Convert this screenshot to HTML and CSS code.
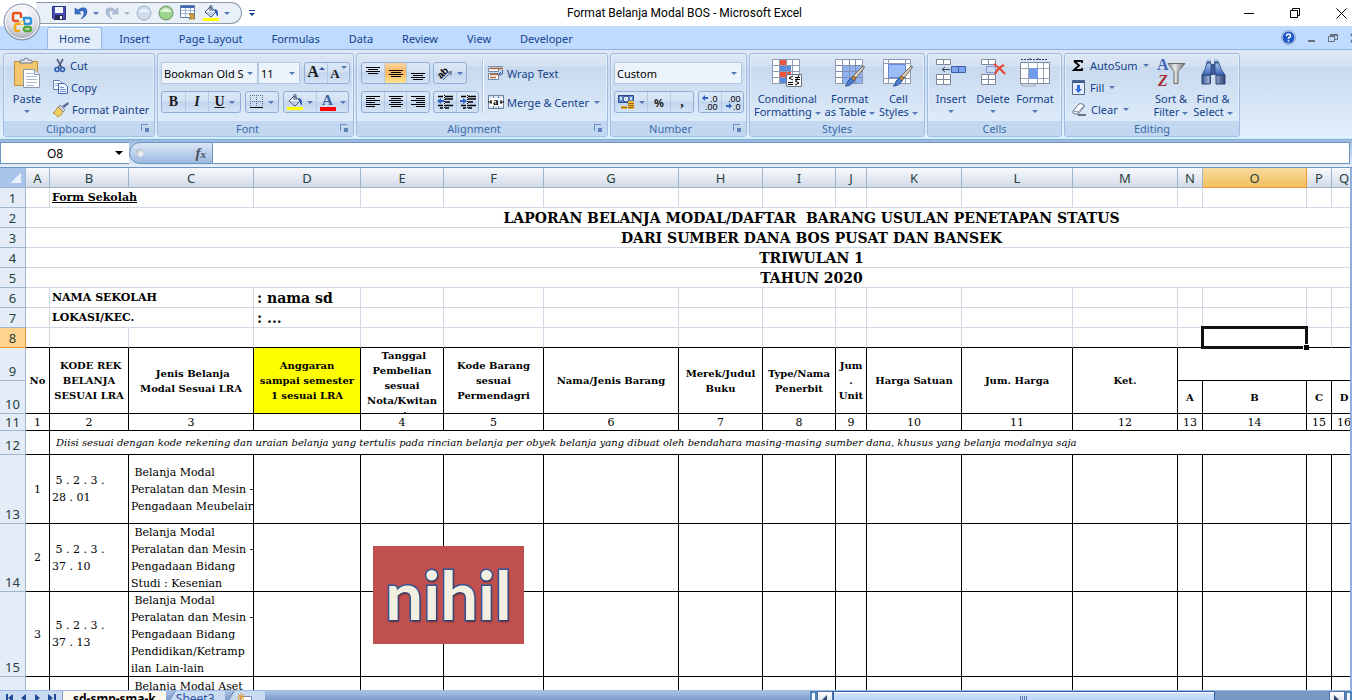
FILE: index.html
```
<!DOCTYPE html>
<html lang="id">
<head>
    <meta charset="UTF-8">
    <meta name="viewport" content="width=device-width, initial-scale=1.0">
    <title>Format Belanja Modal BOS - Microsoft Excel</title>
    <link rel="stylesheet" href="styles.css">
</head>
<body>
    <!-- shared icon parts -->
    <svg class="defs" width="0" height="0" aria-hidden="true">
        <defs>
            <linearGradient id="gBlue" x1="0" y1="0" x2="0" y2="1"><stop offset="0" stop-color="#a9c4f0"/><stop offset="1" stop-color="#3a62b5"/></linearGradient>
            <linearGradient id="gSteel" x1="0" y1="0" x2="1" y2="0"><stop offset="0" stop-color="#35538f"/><stop offset=".4" stop-color="#c6d6f0"/><stop offset="1" stop-color="#2c4577"/></linearGradient>
            <linearGradient id="gGrey" x1="0" y1="0" x2="1" y2="0"><stop offset="0" stop-color="#8b8b8b"/><stop offset=".4" stop-color="#e8e8e8"/><stop offset="1" stop-color="#6b6b6b"/></linearGradient>
            <radialGradient id="gOrb" cx=".5" cy=".25" r=".8"><stop offset="0" stop-color="#ffffff"/><stop offset=".6" stop-color="#dcdfe6"/><stop offset="1" stop-color="#8f99ab"/></radialGradient>
            <symbol id="bucket" viewBox="0 0 16 16">
                <path d="M2 7 7 2l6 5-5 5z" fill="#f4f7fc" stroke="#3b4f74"/>
                <path d="M3 7h9L8 11z" fill="#b9cbe6"/>
                <path d="M7 6V1.500q0-1 1-1t1 1V6" fill="none" stroke="#3b4f74"/>
                <path d="M11 4q4 0 4 4v3q-2 0-2-3z" fill="#2f60b8"/>
                <path d="M0 13h16v3H0z" fill="#ff0"/>
            </symbol>
            <symbol id="brush" viewBox="0 0 20 22">
                <path d="M18 1q2 0 1 2l-8 10-3-2z" fill="#d9d0c4" stroke="#6d6255"/>
                <path d="M8 11l3 2-2 3-3-3z" fill="#c48b4e" stroke="#7e5426"/>
                <path d="M6 13l3 3q-3 5-9 5 3-2 3-5z" fill="#4f7ecb" stroke="#2d559d"/>
            </symbol>
        </defs>
    </svg>

    <header class="titlebar">
        <button class="orb" aria-label="Office Button">
            <svg width="38" height="38" viewBox="0 0 38 38">
                <circle cx="19" cy="19" r="18" fill="url(#gOrb)" stroke="#8291ab"/>
                <circle cx="19" cy="19" r="16.500" fill="none" stroke="#fff"/>
                <g fill="none" stroke-width="2.400">
                    <path d="M16 18h-4q-2 0-2-2v-4q0-2 2-2h4q2 0 2 2v3" stroke="#e8501e"/>
                    <path d="M21 15h5q2 0 2 2v2q0 2-2 2h-3q-2 0-2-2z" stroke="#2f93dc"/>
                    <path d="M17 21h-3q-2 0-2 2v3q0 2 2 2h3" stroke="#f5a81c"/>
                    <path d="M21 28v-4M21 24h5q2 0 2 2v0q0 2-2 2h-5" stroke="#58a93b"/>
                </g>
                <path d="M17 18h4v4h-4z" fill="#f7c046"/>
                <path d="M18 19h2v2h-2z" fill="#fff"/>
            </svg>
        </button>
        <div class="qat">
            <button aria-label="Save"><svg width="14" height="14" viewBox="0 0 14 14"><path d="M.5.5h13v13H2L.5 12z" fill="#4a4fb5" stroke="#2c2f86"/><path d="M3 1h8v6H3z" fill="#f3f6ff"/><path d="M3 9h8v5H3z" fill="#252a52"/><path d="M8 10h2v3H8z" fill="#fff"/></svg></button>
            <button class="with-caret" aria-label="Undo"><svg width="14" height="14" viewBox="0 0 14 14"><path d="M1 2v6h6L5 6q5-3 5 1 0 3-3 6 6-3 6-7 0-5-5-4-2 0-4 2z" fill="#3b6fc9" stroke="#2754a5" stroke-width=".6"/></svg><i class="caret"></i></button>
            <button class="with-caret off" aria-label="Redo"><svg width="14" height="14" viewBox="0 0 14 14"><path d="M13 2v6H7l2-2q-5-3-5 1 0 3 3 6-6-3-6-7 0-5 5-4 2 0 4 2z" fill="#aebfd6" stroke="#93a6c2" stroke-width=".6"/></svg><i class="caret"></i></button>
            <button aria-label="Back"><svg width="16" height="16" viewBox="0 0 16 16"><circle cx="8" cy="8" r="7" fill="#cfdcec" stroke="#9fb1c9"/><path d="M2 7q6-7 12 0z" fill="#e9f0f8"/></svg></button>
            <button aria-label="Forward"><svg width="16" height="16" viewBox="0 0 16 16"><circle cx="8" cy="8" r="7" fill="#9cd58a" stroke="#6f8f70"/><path d="M2 7q6-8 12 0z" fill="#dff3d8"/></svg></button>
            <button aria-label="Form"><svg width="17" height="16" viewBox="0 0 17 16"><path d="M.5.5h14v12H.5z" fill="#fff" stroke="#6280ad"/><path d="M1 1h13v2H1z" fill="#3f68b4"/><path d="M1 5.500h13M1 8.500h13M5.500 3v9M10.500 3v9" stroke="#9fb4d8"/><path d="M9 9h6l-2 2 2 3H9l2-2z" fill="#e2ab3e" stroke="#8c6113" stroke-width=".7"/></svg></button>
            <button class="with-caret" aria-label="Fill Color"><svg width="16" height="16"><use href="#bucket"/></svg><i class="caret"></i></button>
        </div>
        <button class="qat-more" aria-label="Customize Quick Access Toolbar"><i></i><i class="caret"></i></button>
        <h1>Format Belanja Modal BOS - Microsoft Excel</h1>
        <div class="win">
            <button aria-label="Minimize"><svg width="11" height="11"><path d="M0 5.500h10" stroke="#000"/></svg></button>
            <button aria-label="Restore"><svg width="11" height="11"><path d="M.5 2.500h7v7h-7zM2.500 2.500v-2h7v7h-2" fill="none" stroke="#000"/></svg></button>
            <button aria-label="Close"><svg width="11" height="11"><path d="M.5.5l10 10M10.500.5l-10 10" stroke="#000"/></svg></button>
        </div>
    </header>

    <nav class="tabs">
        <a href="#" class="active">Home</a>
        <a href="#">Insert</a>
        <a href="#">Page Layout</a>
        <a href="#">Formulas</a>
        <a href="#">Data</a>
        <a href="#">Review</a>
        <a href="#">View</a>
        <a href="#">Developer</a>
        <div class="doc-controls">
            <button aria-label="Help"><svg width="15" height="15" viewBox="0 0 15 15"><circle cx="7.500" cy="7.500" r="6.500" fill="#2059c8" stroke="#dce9fb"/><circle cx="7.500" cy="7.500" r="7" fill="none" stroke="#5b7bb5" stroke-width=".6"/><path d="M5.500 6q0-2 2-2t2 2q0 1-2 2v1" fill="none" stroke="#fff" stroke-width="1.500"/><path d="M6.700 10.300h1.600v1.500H6.700z" fill="#fff"/></svg></button>
            <button aria-label="Minimize document"><svg width="8" height="8"><path d="M0 6h7v2H0z" fill="#67717f"/></svg></button>
            <button aria-label="Restore document"><svg width="10" height="8"><path d="M.5 2.500h6v5h-6zM2 .5h7.500v5H7" fill="none" stroke="#67717f"/><path d="M2 0h8v2H2z" fill="#67717f"/></svg></button>
            <button aria-label="Close document"><svg width="8" height="8"><path d="M1 0l7 8M8 0L1 8" stroke="#67717f" stroke-width="2"/></svg></button>
        </div>
    </nav>

    <section class="ribbon">
        <div class="group clipboard">
            <div class="group-body">
                <button class="big">
                    <svg width="28" height="30" viewBox="0 0 28 30"><path d="M1.500 3.500h23v24h-23z" fill="#f2c66e" stroke="#c3913c"/><path d="M7 5V3q0-1 2-1h2q0-2 2-2t2 2h2q2 0 2 1v2z" fill="#e2e6ec" stroke="#6d7686"/><path d="M10.500 11.500h11l5 5v13h-16z" fill="#fff" stroke="#8797b1"/><path d="M21.500 11.500v5h5" fill="#dbe6f5" stroke="#8797b1"/><path d="M13 15.500h7M13 18.500h11M13 21.500h11M13 24.500h11M13 27.500h8" stroke="#a8b9d4"/></svg>
                    <span>Paste</span><i class="caret"></i>
                </button>
                <div class="list">
                    <button><svg width="14" height="15" viewBox="0 0 14 15"><path d="M4 1l5 9M10 1L5 10" stroke="#51617c" stroke-width="1.600"/><circle cx="4" cy="11.500" r="2" fill="none" stroke="#2d5ab0" stroke-width="1.600"/><circle cx="9.500" cy="11.500" r="2" fill="none" stroke="#2d5ab0" stroke-width="1.600"/></svg>Cut</button>
                    <button><svg width="15" height="14" viewBox="0 0 15 14"><path d="M.5.5h6l2 2v7h-8z" fill="#fff" stroke="#5c7db3"/><path d="M2 3.500h4M2 5.500h4" stroke="#8aa8d8"/><path d="M5.500 3.500h6l3 3v7h-9z" fill="#eef4ff" stroke="#3e64a8"/><path d="M7 7.500h4M7 9.500h6M7 11.500h6" stroke="#6f95d2"/></svg>Copy</button>
                    <button><svg width="16" height="15" viewBox="0 0 16 15"><path d="M15 0l1 2-5 4-2-2z" fill="#5a6f9c"/><path d="M7 3l5 5-2 2-5-5z" fill="#c8cfdb" stroke="#5f6c84" stroke-width=".7"/><path d="M5 5l5 5q-2 4-5 5-2-3-5-4 3-2 5-6z" fill="#f1cf62" stroke="#9c7921" stroke-width=".7"/></svg>Format Painter</button>
                </div>
            </div>
            <div class="caption">Clipboard<i class="launcher"></i></div>
        </div>

        <div class="group font">
            <div class="group-body rows">
                <div class="row">
                    <div class="joined-combos">
                        <select class="combo family" aria-label="Font"><option>Bookman Old S</option></select>
                        <select class="combo size" aria-label="Font Size"><option>11</option></select>
                    </div>
                    <div class="btns">
                        <button class="glyph grow" aria-label="Increase Font Size">A<i class="up"></i></button>
                        <button class="glyph shrink" aria-label="Decrease Font Size">A<i class="caret"></i></button>
                    </div>
                </div>
                <div class="row">
                    <div class="btns biu">
                        <button class="glyph"><b>B</b></button>
                        <button class="glyph"><em>I</em></button>
                        <button class="glyph wide"><u>U</u><i class="caret"></i></button>
                    </div>
                    <div class="btns"><button class="wide" aria-label="Borders"><svg width="14" height="14"><path d="M.5 0v12M6.500 0v12M12.500 0v12M0 .5h13M0 6.500h13" stroke="#5d6b82" stroke-dasharray="1 1"/><path d="M0 12.500h13" stroke="#000" stroke-width="1"/></svg><i class="caret"></i></button></div>
                    <div class="btns">
                        <button class="wide" aria-label="Fill Color"><svg width="16" height="16"><use href="#bucket"/></svg><i class="caret"></i></button>
                        <button class="wide" aria-label="Font Color"><span class="fcolor">A</span><i class="caret"></i></button>
                    </div>
                </div>
            </div>
            <div class="caption">Font<i class="launcher"></i></div>
        </div>

        <div class="group alignment">
            <div class="group-body">
                <div class="rows">
                    <div class="row">
                        <div class="btns three">
                            <button aria-label="Top Align"><svg width="14" height="14"><path d="M0 1.500h14M2 3.500h10M0 5.500h14M2 7.500h10" stroke="#000"/></svg></button>
                            <button class="on" aria-label="Middle Align"><svg width="14" height="14"><path d="M0 4.500h14M2 6.500h10M0 8.500h14M2 10.500h10" stroke="#000"/></svg></button>
                            <button aria-label="Bottom Align"><svg width="14" height="14"><path d="M0 7.500h14M2 9.500h10M0 11.500h14M2 13.500h10" stroke="#000"/></svg></button>
                        </div>
                        <div class="btns"><button class="wide" aria-label="Orientation"><svg width="16" height="16" viewBox="0 0 16 16"><text x="0" y="11" transform="rotate(-45 6 8)" font-family="Liberation Sans" font-size="10" font-weight="bold">ab</text><path d="M6 15l8-8M14.500 6.500l-4 1M14.500 6.500l-1 4" stroke="#55657f" fill="none"/></svg><i class="caret"></i></button></div>
                    </div>
                    <div class="row">
                        <div class="btns three">
                            <button aria-label="Align Left"><svg width="14" height="12"><path d="M0 .5h14M0 2.500h9M0 4.500h14M0 6.500h9M0 8.500h14M0 10.500h9" stroke="#000"/></svg></button>
                            <button aria-label="Center"><svg width="14" height="12"><path d="M0 .5h14M2 2.500h10M0 4.500h14M2 6.500h10M0 8.500h14M2 10.500h10" stroke="#000"/></svg></button>
                            <button aria-label="Align Right"><svg width="14" height="12"><path d="M0 .5h14M5 2.500h9M0 4.500h14M5 6.500h9M0 8.500h14M5 10.500h9" stroke="#000"/></svg></button>
                        </div>
                        <div class="btns two">
                            <button aria-label="Decrease Indent"><svg width="16" height="14"><path d="M1 1.500h5M8 1.500h8M8 4h8M8 7h5M1 10.500h5M8 10.500h8M3 13h3M8 13h4" stroke="#000" stroke-width="1.300"/><path d="M7.500 0v14" stroke="#000" stroke-dasharray="1 1"/><path d="M0 6l4-3v2h3v2H4v2z" fill="#2f62c4"/></svg></button>
                            <button aria-label="Increase Indent"><svg width="16" height="14"><path d="M1 1.500h5M8 1.500h8M8 4h8M8 7h5M1 10.500h5M8 10.500h8M3 13h3M8 13h4" stroke="#000" stroke-width="1.300"/><path d="M7.500 0v14" stroke="#000" stroke-dasharray="1 1"/><path d="M7 6L3 3v2H0v2h3v2z" fill="#2f62c4"/></svg></button>
                        </div>
                    </div>
                </div>
                <div class="sep"></div>
                <div class="rows plain">
                    <button><svg width="16" height="16" viewBox="0 0 16 16"><path d="M.5 3.500h10v3H.5zM.5 8.500h10v6H.5z" fill="#fff" stroke="#6f83a3"/><path d="M0 1.500h15" stroke="#7a8fb0"/><path d="M2 3.500h13M2 9.500h8M2 12.500h6" stroke="#b0673c" stroke-width="1.500"/><path d="M14.500 5v4h-3M13 7l-2 2 2 2" fill="none" stroke="#3f5f9a"/></svg>Wrap Text</button>
                    <button><svg width="16" height="16" viewBox="0 0 16 16"><path d="M.5 1.500h15v13H.5z" fill="#dbe6f5" stroke="#6f83a3"/><path d="M5.500 1v3M10.500 1v3M5.500 12v3M10.500 12v3" stroke="#6f83a3"/><path d="M1 4h14v8H1z" fill="#fff"/><path d="M0 8h4M12 8h4M3 6v4M13 6v4" stroke="#000"/><text x="5" y="11" font-family="Liberation Serif" font-weight="bold" font-size="11">a</text></svg>Merge &amp; Center<i class="caret"></i></button>
                </div>
            </div>
            <div class="caption">Alignment<i class="launcher"></i></div>
        </div>

        <div class="group number">
            <div class="group-body rows">
                <select class="combo" aria-label="Number Format"><option>Custom</option></select>
                <div class="row">
                    <div class="btns money">
                        <button class="wide" aria-label="Accounting Number Format"><svg width="17" height="16" viewBox="0 0 17 16"><path d="M.5 1.500h15v7H.5z" fill="#5f8bd0" stroke="#2a4c8e"/><circle cx="8" cy="5" r="3" fill="#d6e3f6" stroke="#2a4c8e"/><path d="M2 3h2v3H2zM12 3h2v3h-2z" fill="#cbdcf4"/><path d="M10 7h6v8h-6zM3 12h6v3H3z" fill="#efb530"/><path d="M10 9.500h6M10 11.500h6M10 13.500h6M3 13.500h6" stroke="#9a6910"/></svg><i class="caret"></i></button>
                        <button class="pct">%</button>
                        <button class="glyph">,</button>
                    </div>
                    <div class="btns two">
                        <button aria-label="Increase Decimal"><svg width="16" height="15" viewBox="0 0 16 15"><text x="8" y="7" font-family="Liberation Sans" font-size="9">.0</text><text x="3" y="15" font-family="Liberation Sans" font-size="9">.00</text><path d="M0 3l3-3v2h3v2H3v2z" fill="#2f62c4"/></svg></button>
                        <button aria-label="Decrease Decimal"><svg width="16" height="15" viewBox="0 0 16 15"><text x="3" y="7" font-family="Liberation Sans" font-size="9">.00</text><text x="8" y="15" font-family="Liberation Sans" font-size="9">.0</text><path d="M7 11L4 8v2H1v2h3v2z" fill="#2f62c4"/></svg></button>
                    </div>
                </div>
            </div>
            <div class="caption">Number<i class="launcher"></i></div>
        </div>

        <div class="group styles">
            <div class="group-body">
                <button class="big">
                    <svg width="30" height="30" viewBox="0 0 30 30"><path d="M.5 1.500h27v24H.5z" fill="#fff" stroke="#8c9ab3"/><path d="M7 2h7v6H7zM7 14h12v6H7z" fill="#f0553b"/><path d="M7 8h12v6H7z" fill="#5b8be0"/><path d="M7 20h7v5H7z" fill="#5b8be0"/><path d="M0 7.500h28M0 13.500h28M0 19.500h28M7.500 1v25M14.500 1v25M20.500 1v25" stroke="#8c9ab3"/><path d="M14.500 16.500h15v12h-15z" fill="#fff" stroke="#6b7486"/><path d="M21 18l-4 2 4 2M16 24.500h5M23 19.500h5M23 21.500h5M27 17l-3 6M23 23l4 2-4 2M16 26.500h5" fill="none" stroke="#000"/></svg>
                    <span>Conditional<br>Formatting <i class="caret"></i></span>
                </button>
                <button class="big">
                    <svg width="30" height="30" viewBox="0 0 30 30"><path d="M.5 1.500h27v24H.5z" fill="#fff" stroke="#8c9ab3"/><path d="M7 7h20v18H7z" fill="#8fb2f0"/><path d="M0 7.500h28M0 13.500h28M0 19.500h28M7.500 1v25M14.500 1v25M20.500 1v25" stroke="#7f91b3"/><use href="#brush" x="10" y="7" width="20" height="22"/></svg>
                    <span>Format<br>as Table <i class="caret"></i></span>
                </button>
                <button class="big">
                    <svg width="30" height="30" viewBox="0 0 30 30"><path d="M.5 1.500h27v24H.5z" fill="#fff" stroke="#8c9ab3"/><path d="M0 5.500h28M0 20.500h28M5.500 1v25M22.500 1v25" stroke="#8c9ab3"/><path d="M5.500 6.500h17v13h-17z" fill="#9dbdf8" stroke="#6288d6"/><use href="#brush" x="10" y="7" width="20" height="22"/></svg>
                    <span>Cell<br>Styles <i class="caret"></i></span>
                </button>
            </div>
            <div class="caption">Styles</div>
        </div>

        <div class="group cells">
            <div class="group-body">
                <button class="big">
                    <svg width="30" height="30" viewBox="0 0 30 30"><path d="M.5 1.500h14v5H.5zM.5 16.500h14v10H.5zM.5 21.500h14M7.500 1.500v5M7.500 16.500v10" fill="#fff" stroke="#7d889b"/><path d="M15.500 8.500h14v6h-14z" fill="#7ea4ec" stroke="#3a5ea8"/><path d="M22.500 8.500v6" stroke="#3a5ea8"/><path d="M6 11.500h8M9 9l-3 2.500L9 14" fill="none" stroke="#33435e"/></svg>
                    <span>Insert</span><i class="caret"></i>
                </button>
                <button class="big">
                    <svg width="30" height="30" viewBox="0 0 30 30"><path d="M3.500 1.500h14v5h-14zM3.500 16.500h14v10h-14zM3.500 21.500h14M10.500 1.500v5M10.500 16.500v10" fill="#fff" stroke="#7d889b"/><path d="M8.500 8.500h9v6h-9z" fill="none" stroke="#2f5cc0" stroke-dasharray="1 1"/><path d="M16 6q6 4 11 10M26 7q-6 3-9 9" fill="none" stroke="#e8432c" stroke-width="2"/></svg>
                    <span>Delete</span><i class="caret"></i>
                </button>
                <button class="big">
                    <svg width="30" height="30" viewBox="0 0 30 30"><path d="M.5 4.500h29v21H.5z" fill="#fff" stroke="#7d889b"/><path d="M.5 10.500h29M.5 20.500h29M8.500 4.500v21M17.500 4.500v21M23.500 4.500v21" stroke="#9aa5b8"/><path d="M9 10h9v11H9z" fill="#6f9bea"/><path d="M2 26h13v2H2z" fill="#f4f6fa" stroke="#9aa5b8"/><path d="M1 1.500h26M10 0v3M18 0v3" stroke="#33435e" stroke-dasharray="2 1"/></svg>
                    <span>Format</span><i class="caret"></i>
                </button>
            </div>
            <div class="caption">Cells</div>
        </div>

        <div class="group editing">
            <div class="group-body">
                <div class="list">
                    <button><svg width="13" height="13" viewBox="0 0 13 13"><path d="M2 2h8v2M2 2l5 4.500L2 11h8V9" fill="none" stroke="#000" stroke-width="1.800"/></svg>AutoSum<i class="caret"></i></button>
                    <button><svg width="13" height="15" viewBox="0 0 13 15"><path d="M.5.5h12v14H.5z" fill="#e6eefb" stroke="#52668c"/><path d="M1 1h11v2H1z" fill="#3e5b94"/><path d="M5 5h3v4h2l-3.500 4L3 9h2z" fill="#2f6de0"/></svg>Fill<i class="caret"></i></button>
                    <button><svg width="14" height="13" viewBox="0 0 14 13"><path d="M1 8l6-7q1-1 3 0l2 1q1 1 0 2l-6 7H3L1 10z" fill="#fff" stroke="#66738c"/><path d="M1 8l5 1v2M6 9l6-6" fill="none" stroke="#8894aa"/><path d="M6 12h8" stroke="#000"/></svg>Clear<i class="caret"></i></button>
                </div>
                <button class="big">
                    <svg width="30" height="30" viewBox="0 0 30 30"><text x="1" y="12" font-family="Liberation Serif" font-weight="bold" font-size="16" fill="#3c65b4">A</text><text x="2" y="28" font-family="Liberation Serif" font-weight="bold" font-style="italic" font-size="16" fill="#a03030">Z</text><path d="M12 5.500h17l-7 8v12h-4v-12z" fill="url(#gGrey)" stroke="#6b6b6b"/></svg>
                    <span>Sort &amp;<br>Filter <i class="caret"></i></span>
                </button>
                <button class="big">
                    <svg width="30" height="30" viewBox="0 0 30 30"><path d="M9 2h4v4h3V2h4l3 9 4 6v9h-9v-9h-5v9H4v-9l3-6z" fill="#3c5a98"/><path d="M4 17h8v9H4zM18 17h9v9h-9z" fill="url(#gSteel)" stroke="#2c4577"/><path d="M7 11l2-6h4v8l-1 4H4zM23 11l-2-6h-4v8l1 4h9z" fill="url(#gBlue)" stroke="#2c4577" stroke-width=".7"/><path d="M9 2.500h4M16 2.500h4" stroke="#a9bfe4" stroke-width="2"/></svg>
                    <span>Find &amp;<br>Select <i class="caret"></i></span>
                </button>
            </div>
            <div class="caption">Editing</div>
        </div>
    </section>

    <div class="formula-bar">
        <input class="name-box" type="text" value="O8" aria-label="Name Box">
        <button class="name-drop" aria-label="Names"></button>
        <button class="fx" aria-label="Insert Function"><span></span><em>f<small>x</small></em></button>
        <input class="formula" type="text" value="" aria-label="Formula">
    </div>

    <main class="sheet">
        <table>
            <colgroup>
                <col class="w-head"><col class="w-a"><col class="w-b"><col class="w-c"><col class="w-d"><col class="w-e"><col class="w-f"><col class="w-g"><col class="w-h"><col class="w-i"><col class="w-j"><col class="w-k"><col class="w-l"><col class="w-m"><col class="w-n"><col class="w-o"><col class="w-n"><col class="w-n">
            </colgroup>
            <thead>
                <tr>
                    <th class="corner"></th>
                    <th>A</th><th>B</th><th>C</th><th>D</th><th>E</th><th>F</th><th>G</th><th>H</th><th>I</th><th>J</th><th>K</th><th>L</th><th>M</th><th>N</th><th class="sel">O</th><th>P</th><th>Q</th>
                </tr>
            </thead>
            <tbody>
                <tr><th>1</th><td></td><td colspan="2" class="lbl"><u>Form Sekolah</u></td><td></td><td></td><td></td><td></td><td></td><td></td><td></td><td></td><td></td><td></td><td></td><td></td><td></td><td></td></tr>
                <tr><th>2</th><td colspan="17" class="title">LAPORAN BELANJA MODAL/DAFTAR&nbsp; BARANG USULAN PENETAPAN STATUS</td></tr>
                <tr><th>3</th><td colspan="17" class="title">DARI SUMBER DANA BOS PUSAT DAN BANSEK</td></tr>
                <tr><th>4</th><td colspan="17" class="title">TRIWULAN 1</td></tr>
                <tr><th>5</th><td colspan="17" class="title">TAHUN 2020</td></tr>
                <tr><th>6</th><td></td><td colspan="2" class="lbl">NAMA SEKOLAH</td><td class="val">: nama sd</td><td></td><td></td><td></td><td></td><td></td><td></td><td></td><td></td><td></td><td></td><td></td><td></td><td></td></tr>
                <tr><th>7</th><td></td><td colspan="2" class="lbl">LOKASI/KEC.</td><td class="val">: ...</td><td></td><td></td><td></td><td></td><td></td><td></td><td></td><td></td><td></td><td></td><td></td><td></td><td></td></tr>
                <tr class="above"><th class="sel">8</th><td></td><td></td><td></td><td></td><td></td><td></td><td></td><td></td><td></td><td></td><td></td><td></td><td></td><td></td><td class="active-cell"></td><td></td><td></td></tr>
            </tbody>
            <tbody class="form">
                <tr class="r9 heads">
                    <th>9</th>
                    <td rowspan="2">No</td>
                    <td rowspan="2">&nbsp;KODE REK<br>BELANJA<br>SESUAI LRA</td>
                    <td rowspan="2">&nbsp;Jenis Belanja<br>Modal Sesuai LRA</td>
                    <td rowspan="2" class="yellow">Anggaran<br>sampai semester<br>1 sesuai LRA</td>
                    <td rowspan="2"><div class="clip">&nbsp;Tanggal<br>Pembelian<br>sesuai<br>Nota/Kwitan<br>si</div></td>
                    <td rowspan="2">Kode Barang<br>sesuai<br>Permendagri</td>
                    <td rowspan="2">Nama/Jenis Barang</td>
                    <td rowspan="2">Merek/Judul<br>Buku</td>
                    <td rowspan="2">Type/Nama<br>Penerbit</td>
                    <td rowspan="2">Jum<br>.<br>Unit</td>
                    <td rowspan="2">Harga Satuan</td>
                    <td rowspan="2">Jum. Harga</td>
                    <td rowspan="2">Ket.</td>
                    <td colspan="4"></td>
                </tr>
                <tr class="r10 heads"><th>10</th><td>A</td><td>B</td><td>C</td><td>D</td></tr>
                <tr class="r11"><th>11</th><td>1</td><td>2</td><td>3</td><td></td><td>4</td><td>5</td><td>6</td><td>7</td><td>8</td><td>9</td><td>10</td><td>11</td><td>12</td><td>13</td><td>14</td><td>15</td><td>16</td></tr>
                <tr class="r12"><th>12</th><td></td><td colspan="16" class="note">Diisi sesuai dengan kode rekening dan uraian belanja yang tertulis pada rincian belanja per obyek belanja yang dibuat oleh bendahara masing-masing sumber dana, khusus yang belanja modalnya saja</td></tr>
                <tr class="r13"><th>13</th><td>1</td><td class="left">&nbsp;5 . 2 . 3 .<br>28 . 01</td><td class="left"><div class="clip">&nbsp;Belanja Modal<br>Peralatan dan Mesin -<br>Pengadaan Meubelair</div></td><td></td><td></td><td></td><td></td><td></td><td></td><td></td><td></td><td></td><td></td><td></td><td></td><td></td><td></td></tr>
                <tr class="r14"><th>14</th><td>2</td><td class="left">&nbsp;5 . 2 . 3 .<br>37 . 10</td><td class="left"><div class="clip">&nbsp;Belanja Modal<br>Peralatan dan Mesin -<br>Pengadaan Bidang<br>Studi : Kesenian</div></td><td></td><td></td><td></td><td></td><td></td><td></td><td></td><td></td><td></td><td></td><td></td><td></td><td></td><td></td></tr>
                <tr class="r15"><th>15</th><td>3</td><td class="left">&nbsp;5 . 2 . 3 .<br>37 . 13</td><td class="left"><div class="clip">&nbsp;Belanja Modal<br>Peralatan dan Mesin -<br>Pengadaan Bidang<br>Pendidikan/Ketramp<br>ilan Lain-lain</div></td><td></td><td></td><td></td><td></td><td></td><td></td><td></td><td></td><td></td><td></td><td></td><td></td><td></td><td></td></tr>
                <tr class="r16"><th></th><td></td><td></td><td class="left">&nbsp;Belanja Modal Aset</td><td></td><td></td><td></td><td></td><td></td><td></td><td></td><td></td><td></td><td></td><td></td><td></td><td></td><td></td></tr>
            </tbody>
        </table>
        <div class="stamp">nihil</div>
    </main>

    <footer class="bottom">
        <div class="sheet-nav">
            <button aria-label="First sheet"><svg width="8" height="8"><path d="M0 0h2v8H0zM7 0v8L2 4z" fill="#1f4a96"/></svg></button>
            <button aria-label="Previous sheet"><svg width="8" height="8"><path d="M6 0v8L1 4z" fill="#1f4a96"/></svg></button>
            <button aria-label="Next sheet"><svg width="8" height="8"><path d="M1 0v8l5-4z" fill="#1f4a96"/></svg></button>
            <button aria-label="Last sheet"><svg width="8" height="8"><path d="M0 0v8l5-4zM6 0h2v8H6z" fill="#1f4a96"/></svg></button>
        </div>
        <button class="sheet-tab current">sd-smp-sma-k</button>
        <button class="sheet-tab">Sheet3</button>
        <button class="sheet-tab new" aria-label="Insert Worksheet"><svg width="16" height="14" viewBox="0 0 16 14"><path d="M3.500 3.500h11v10h-11z" fill="#fff" stroke="#7289b3"/><path d="M4 0v8M0 4h8M1 1l6 6M7 1L1 7" stroke="#e39a2e"/></svg></button>
        <div class="scroll">
            <span class="grip"></span>
            <button aria-label="Scroll left"><svg width="6" height="10"><path d="M5 0v10L0 5z" fill="#31456f"/></svg></button>
            <div class="track"><div class="thumb"><i></i></div></div>
            <button aria-label="Scroll right"><svg width="6" height="10"><path d="M0 0v10l5-5z" fill="#31456f"/></svg></button>
            <span class="grip"></span>
        </div>
    </footer>
</body>
</html>
```
FILE: styles.css
```
* {
    box-sizing: border-box;
}
body {
    margin: 0;
    height: 100vh;
    overflow: hidden;
    display: flex;
    flex-direction: column;
    font-family: "Noto Sans", "Open Sans", sans-serif;
    font-size: 11px;
    color: #15428b;
    background: #bfdbff;
}
button {
    font: inherit;
    color: inherit;
    background: none;
    border: 0;
    padding: 0;
    display: flex;
    align-items: center;
    justify-content: center;
    white-space: nowrap;
}
svg {
    flex: none;
    display: block;
    overflow: visible;
}
.defs {
    position: absolute;
}
.caret {
    display: inline-block;
    flex: none;
    border: 3px solid transparent;
    border-top-color: #5578b4;
    border-bottom: 0;
    vertical-align: middle;
}

/* title bar */
.titlebar {
    position: relative;
    flex: none;
    height: 26px;
    display: flex;
    align-items: center;
    background: #fff;
    padding-left: 36px;
}
.orb {
    position: absolute;
    left: 3px;
    top: 3px;
    z-index: 2;
}
.qat {
    width: 206px;
    height: 22px;
    display: flex;
    align-items: center;
    gap: 6px;
    padding-left: 16px;
    border: 1px solid #8d99ab;
    border-left: 0;
    border-radius: 0 11px 11px 0;
    background: #eaf0f8;
}
.qat button:first-child {
    margin-right: 2px;
}
.qat .with-caret {
    gap: 5px;
}
.qat .off .caret {
    border-top-color: #a9b4c4;
}
.qat-more {
    width: 20px;
    flex-direction: column;
    gap: 2px;
}
.qat-more i:first-child {
    width: 6px;
    height: 1px;
    background: #15428b;
}
.qat-more .caret {
    border-top-color: #15428b;
}
.titlebar h1 {
    flex: 1;
    margin: 0;
    font: 12px Roboto, sans-serif;
    text-align: center;
    color: #000;
}
.win {
    width: 245px;
    display: flex;
    justify-content: flex-end;
}
.win button {
    width: 46px;
    height: 26px;
}
.win button:last-child {
    width: 34px;
    justify-content: flex-end;
    padding-right: 5px;
}

/* ribbon tabs */
.tabs {
    flex: none;
    height: 23px;
    display: flex;
    align-items: flex-end;
    gap: 5px;
    padding-left: 47px;
}
.tabs a {
    padding: 0 11px;
    line-height: 21px;
    color: inherit;
    text-decoration: none;
    border: 1px solid transparent;
    border-bottom: 0;
}
.tabs .active {
    background: #e4eefb;
    border-color: #93bbea;
    border-radius: 3px 3px 0 0;
    box-shadow: inset 0 1px 0 #fff;
}
.doc-controls {
    flex: 1;
    height: 23px;
    display: flex;
    align-items: center;
    justify-content: flex-end;
    gap: 12px;
    margin-right: -6px;
}

/* ribbon */
.ribbon {
    flex: none;
    height: 90px;
    display: flex;
    gap: 2px;
    padding: 3px 3px 1px;
    border-top: 1px solid #8db2e3;
    border-bottom: 1px solid #b6f0fb;
    background: linear-gradient(#dfe9f5 0, #d4e1f2 16px, #c8d9ee 17px, #e3f0fd 100%);
}
.group {
    flex: none;
    display: flex;
    flex-direction: column;
    border: 1px solid #9fbde0;
    border-radius: 3px;
    box-shadow: inset 0 0 0 1px #e3edf9;
}
.clipboard { width: 152px; }
.font { width: 197px; }
.alignment { width: 252px; }
.number { width: 137px; }
.styles { width: 176px; }
.cells { width: 135px; }
.editing { width: 176px; }
.group-body {
    flex: 1;
    display: flex;
    min-height: 0;
}
.caption {
    position: relative;
    height: 15px;
    padding-right: 16px;
    line-height: 15px;
    text-align: center;
    color: #3e6aaa;
    background: #c1d8f0;
    border-radius: 0 0 2px 2px;
}
.styles .caption,
.cells .caption,
.editing .caption {
    padding-right: 0;
}
.launcher {
    position: absolute;
    right: 6px;
    top: 3px;
    width: 7px;
    height: 7px;
    border: 1px solid #6a8cbf;
    border-right: 0;
    border-bottom: 0;
}
.launcher::after {
    content: "";
    position: absolute;
    left: 3px;
    top: 3px;
    width: 4px;
    height: 4px;
    background: #5f83b8;
}
.big {
    flex-direction: column;
    justify-content: flex-start;
    padding-top: 4px;
    line-height: 13px;
    text-align: center;
}
.big svg {
    margin-bottom: 4px;
}
.big > .caret {
    margin-top: 5px;
}
.clipboard .big {
    width: 46px;
}
.cells .group-body {
    padding-left: 2px;
}
.cells .big {
    width: 42px;
}
.styles .group-body {
    padding-left: 4px;
    gap: 4px;
}
.editing .group-body {
    padding-left: 7px;
}
.editing .big {
    width: 42px;
}
.list {
    display: flex;
    flex-direction: column;
    padding-left: 3px;
}
.list button {
    height: 22px;
    gap: 3px;
    justify-content: flex-start;
}
.editing .list {
    width: 78px;
    padding-left: 0;
}
.editing .list button {
    gap: 5px;
}
.rows {
    flex-direction: column;
    display: flex;
    gap: 7px;
    padding: 8px 4px 0 3px;
}
.row {
    display: flex;
    gap: 4px;
}
.btns {
    display: flex;
    height: 22px;
    border: 1px solid #92aed6;
    border-radius: 3px;
    background: linear-gradient(#dce8f7 0, #d3e1f3 9px, #c2d5ee 10px, #d3e3f6 100%);
}
.btns button {
    width: 22px;
}
.btns button + button {
    border-left: 1px solid #b3c9e6;
}
.btns .wide {
    width: 32px;
    gap: 4px;
}
.btns .on {
    background: linear-gradient(#fbd7a5, #fdb55c 45%, #ffe48f);
}
.combo {
    appearance: none;
    height: 22px;
    border: 1px solid #b3c8e4;
    border-radius: 0;
    padding: 0 2px;
    font: inherit;
    color: #000;
    background: #edf3fb url("data:image/svg+xml,%3Csvg xmlns='http://www.w3.org/2000/svg' width='6' height='3'%3E%3Cpath d='M0 0h6L3 3z' fill='%235578b4'/%3E%3C/svg%3E") no-repeat right 4px center;
}
.joined-combos {
    display: flex;
    width: 139px;
}
.family { width: 97px; }
.size { width: 42px; }
.number .combo { width: 128px; }
.glyph {
    font-family: "Liberation Serif", serif;
    font-size: 14px;
    font-weight: bold;
    color: #1a1a1a;
}
.btns .grow,
.btns .shrink {
    font-size: 16px;
    align-items: flex-start;
}
.btns .shrink {
    font-size: 13px;
    padding-top: 3px;
}
.shrink .caret {
    margin-left: 1px;
}
.up {
    border: 3px solid transparent;
    border-bottom-color: #3c5fa5;
    border-top: 0;
    margin-top: 4px;
}
.biu button {
    width: 23px;
}
.fcolor {
    width: 16px;
    font: bold 15px/13px "Liberation Serif", serif;
    color: #3b5f9f;
    border-bottom: 4px solid #f00;
}
.alignment .rows {
    padding: 8px 3px 0 4px;
}
.alignment .row {
    gap: 3px;
}
.alignment .three {
    width: 69px;
}
.three button {
    flex: 1;
}
.sep {
    width: 2px;
    margin: 6px 0 8px;
    background: #fff;
    border-left: 1px solid #a9c2e2;
}
.alignment .plain {
    padding-left: 4px;
}
.plain button {
    height: 22px;
    gap: 3px;
    justify-content: flex-start;
}
.plain .caret {
    margin-left: 2px;
}
.money button {
    width: 23px;
}
.pct {
    color: #222;
    font-weight: bold;
}

/* formula bar */
.formula-bar {
    flex: none;
    height: 29px;
    display: flex;
    padding: 3px 2px 3px 0;
    border-bottom: 1px solid #6d93c0;
    background: linear-gradient(#8eabd1 0, #a5bfe5 3px, #dfeaf8 26px, #e9f1fb 100%);
}
.formula-bar > * {
    height: 22px;
    border: 1px solid #6d93c0;
    background: #fff;
}
.name-box {
    width: 109px;
    border-right: 0;
    font: 12px "Noto Sans", sans-serif;
    text-align: center;
}
.name-drop {
    width: 20px;
    border-left: 0;
    border-right: 0;
}
.name-drop::before {
    content: "";
    border: 4px solid transparent;
    border-top-color: #000;
    border-bottom: 0;
}
.fx {
    width: 84px;
    justify-content: space-between;
    padding: 0 6px;
    border-radius: 11px 0 0 11px;
    background: linear-gradient(#dbe7f7, #9db9e0);
}
.fx span {
    width: 8px;
    height: 8px;
    border-radius: 50%;
    background: radial-gradient(circle at 60% 60%, #fff, #9aa7bb);
}
.fx em {
    font: italic bold 15px "Liberation Serif", serif;
    color: #4a4f5a;
}
.fx small {
    font-size: 11px;
}
.formula {
    flex: 1;
    border-left: 0;
}

/* sheet */
.sheet {
    position: relative;
    flex: 1;
    min-height: 0;
    overflow: hidden;
    background: #fff;
    border-right: 2px solid #8fb0df;
}
table {
    table-layout: fixed;
    width: 1357px;
    border-collapse: separate;
    border-spacing: 0;
    font-family: "DejaVu Serif", serif;
    font-size: 11px;
    color: #000;
}
.w-head { width: 26px; }
.w-a { width: 24px; }
.w-b { width: 79px; }
.w-c { width: 125px; }
.w-d { width: 107px; }
.w-e { width: 83px; }
.w-f { width: 100px; }
.w-g { width: 135px; }
.w-h { width: 84px; }
.w-i { width: 73px; }
.w-j { width: 31px; }
.w-k { width: 95px; }
.w-l { width: 111px; }
.w-m { width: 105px; }
.w-n { width: 25px; }
.w-o { width: 104px; }
tr {
    height: 20px;
}
td,
th {
    padding: 0;
    border-right: 1px solid #d0d7e5;
    border-bottom: 1px solid #d0d7e5;
    white-space: nowrap;
}
th {
    font: 13px/16px "Noto Sans", sans-serif;
    color: #27413e;
    border-color: #9eb6ce;
}
thead th {
    background: linear-gradient(#f8fafc, #d3dbe9);
}
tbody th {
    background: #e4ecf7;
    vertical-align: bottom;
    padding-bottom: 1px;
}
th.sel {
    background: #ffd58d;
    border-color: #f29536;
}
thead th.sel {
    background: linear-gradient(#f9d99f, #f1c15f);
}
thead .corner {
    background: linear-gradient(135deg, #a9c4e9 50%, #e9f0fa 51%) no-repeat 10px 4px / 11px 11px #a9c4e9;
}
.lbl {
    padding-left: 2px;
    font-weight: bold;
}
.val {
    padding-left: 3px;
    font-size: 14px;
    font-weight: bold;
    line-height: 16px;
}
/* merged range runs past the last visible column */
.title {
    padding-left: 241px;
    text-align: center;
    font-size: 14px;
    font-weight: bold;
    line-height: 16px;
}
.above td {
    border-bottom-color: #000;
}
.active-cell {
    position: relative;
}
.active-cell::after {
    content: "";
    position: absolute;
    inset: -2px;
    border: 3px solid #111;
}
.active-cell::before {
    content: "";
    position: absolute;
    z-index: 1;
    right: -3px;
    bottom: -3px;
    width: 5px;
    height: 5px;
    background: #000;
    border-top: 1px solid #fff;
    border-left: 1px solid #fff;
}
.form td {
    border-color: #000;
    text-align: center;
    line-height: 17px;
}
.form .heads td {
    font-weight: bold;
    font-size: 10px;
    line-height: 15px;
}
.form .left {
    text-align: left;
    padding-left: 2px;
}
.form .note {
    text-align: left;
    padding-left: 6px;
    font-size: 10px;
    font-style: italic;
}
.yellow {
    background: #ff0;
}
.clip {
    overflow: hidden;
}
.r9 { height: 33px; }
.r10 { height: 33px; }
.r11 { height: 17px; }
.r12 { height: 24px; }
.r13 { height: 69px; }
.r14 { height: 68px; }
.r15 { height: 85px; }
.r9 .clip { max-height: 65px; }
.form .r11 td,
.form .r11 th {
    line-height: 15px;
    padding-bottom: 0;
}
.r14 .clip { max-height: 67px; }
.r15 .clip { max-height: 84px; }
.stamp {
    position: absolute;
    left: 373px;
    top: 378px;
    width: 151px;
    height: 98px;
    background: #c0504d;
    color: #f4f0e1;
    font: bold 67px/96px Lato, sans-serif;
    text-align: center;
    -webkit-text-stroke: 3px #2f5597;
    paint-order: stroke fill;
    text-shadow: 1px 2px 2px rgba(60, 20, 20, 0.4);
}

/* sheet tabs and scroll bar, cut by the window edge */
.bottom {
    flex: none;
    height: 10px;
    overflow: hidden;
    display: flex;
    align-items: flex-start;
    border-top: 1px solid #9dbbe4;
    background: linear-gradient(#a9c2e6, #7d9cc9);
}
.sheet-nav {
    display: flex;
    width: 63px;
    height: 17px;
    padding: 3px 6px;
    justify-content: space-between;
    align-items: flex-start;
    background: #c9dbf3;
    border-right: 1px solid #7f9cc8;
}
.sheet-tab {
    height: 15px;
    padding: 0 10px;
    font-size: 12px;
    line-height: 15px;
    background: linear-gradient(120deg, transparent 7px, #7f9cc8 7px, #7f9cc8 8px, #c9dbf3 9px);
    color: #2b539c;
}
.sheet-tab.current {
    background: #fdf8ee;
    color: #000;
    font-weight: bold;
}
.sheet-tab.new {
    padding: 2px 12px 0;
}
.scroll {
    margin-left: auto;
    width: 542px;
    height: 17px;
    display: flex;
    background: #7998c4;
}
.grip {
    width: 7px;
    background: #f4f8fe;
    border: 2px solid #4f83b8;
    border-bottom: 0;
}
.scroll button {
    width: 16px;
    background: linear-gradient(#fff, #c5d1e4);
    border: 1px solid #5270a6;
}
.track {
    flex: 1;
}
.thumb {
    width: 77%;
    height: 17px;
    display: flex;
    justify-content: center;
    border: 1px solid #2f62a8;
    box-shadow: inset 0 1px 0 #fff;
    background: linear-gradient(#d5e6fd, #a3c4f3);
}
.thumb i {
    width: 7px;
    height: 8px;
    margin-top: 4px;
    background: repeating-linear-gradient(90deg, #5a7bb0 0, #5a7bb0 1px, transparent 1px, transparent 2px);
}
```
